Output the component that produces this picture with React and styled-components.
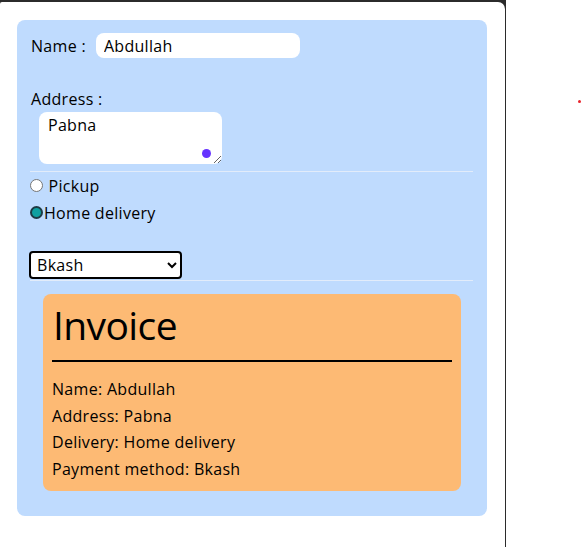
import styled, { createGlobalStyle } from 'styled-components';

const Global = createGlobalStyle`
  html, body {
    margin: 0;
    padding: 0;
    background: #fff;
  }
  body {
    font-family: "Open Sans", "Noto Sans", sans-serif;
    color: #000;
  }
  * { box-sizing: border-box; }
`;

const Frame = styled.div`
  width: 506px;
  height: 547px;
  background: #2b2b2b;
  padding: 2px 1px 0 0;
`;

const Window = styled.div`
  height: 100%;
  background: #fff;
  border-radius: 2px 7px 0 0;
  padding: 18px 0 0 17px;
`;

const Card = styled.form`
  width: 470px;
  background: #bfdbfe;
  border-radius: 8px;
  padding: 13px 14px 25px 13px;
  display: flex;
  flex-direction: column;
  letter-spacing: 0.3px;
`;

const Row = styled.div`
  display: flex;
  align-items: center;
  font-size: 16px;
  line-height: 24px;
`;

const Label = styled.label`
  font-size: 16px;
  line-height: 24px;
  margin-left: 1px;
`;

const TextInput = styled.input`
  width: 204px;
  height: 25px;
  margin-left: 10px;
  border: none;
  border-radius: 8px;
  background: #fff;
  font: inherit;
  font-size: 16px;
  letter-spacing: 0.3px;
  padding: 0 8px;
  outline: none;
`;

const AddressLabel = styled(Label)`
  margin-top: 29px;
`;

const AreaWrap = styled.div`
  position: relative;
  width: 184px;
  height: 53px;
  margin: 1px 0 0 9px;
`;

const TextArea = styled.textarea`
  width: 183px;
  height: 52px;
  border: none;
  border-radius: 8px;
  background: #fff;
  font: inherit;
  font-size: 16px;
  letter-spacing: 0.3px;
  line-height: 22px;
  padding: 2px 9px;
  outline: none;
  display: block;
`;

const Dot = styled.span`
  position: absolute;
  left: 163px;
  top: 37px;
  width: 9px;
  height: 9px;
  border-radius: 50%;
  background: #6633ff;
`;

const Rule = styled.hr`
  border: none;
  border-top: 1px solid ${p => p.$dark ? '#000' : '#e2ecfa'};
  border-top-width: ${p => p.$dark ? '2px' : '1px'};
  margin: ${p => p.$m || '0'};
  width: 100%;
`;

const RadioRow = styled.label`
  display: flex;
  align-items: center;
  height: 27px;
  font-size: 16px;
  white-space: pre;
`;

const Radio = styled.input.attrs({ type: 'radio' })`
  appearance: none;
  width: 13px;
  height: 13px;
  margin: 0 1px 0 0;
  border-radius: 50%;
  border: 1px solid #767676;
  background: #fff;
  &:checked {
    border: 2px solid #1d3b44;
    background: #0fa0a0;
  }
`;

const Select = styled.select`
  width: 153px;
  height: 28px;
  margin: 25px 0 0 -1px;
  border: 2px solid #000;
  border-radius: 4px;
  background: #fff;
  font: inherit;
  font-size: 16px;
  letter-spacing: 0.3px;
  padding: 0 2px;
  color: #000;
`;

const Invoice = styled.div`
  margin: 13px 12px 0 13px;
  background: #fdba74;
  border-radius: 8px;
  padding: 7px 9px 9px 9px;
`;

const Title = styled.h1`
  margin: 0 0 0 1px;
  font-size: 39px;
  font-weight: 400;
  line-height: 48px;
  letter-spacing: -0.6px;
`;

const Line = styled.p`
  margin: 0;
  font-size: 16px;
  line-height: 26.5px;
`;

const Pin = styled.span`
  position: absolute;
  left: 578px;
  top: 100px;
  width: 3px;
  height: 3px;
  border-radius: 50%;
  background: #e8242c;
`;

export default function App() {
  return (
    <>
      <Global />
      <Frame>
        <Window>
          <Card onSubmit={e => e.preventDefault()}>
            <Row>
              <Label>Name :</Label>
              <TextInput defaultValue="Abdullah" />
            </Row>
            <AddressLabel>Address :</AddressLabel>
            <AreaWrap>
              <TextArea defaultValue="Pabna" />
              <Dot />
            </AreaWrap>
            <Rule $m="6px 0 0 0" />
            <RadioRow>
              <Radio name="delivery" />
              {' Pickup'}
            </RadioRow>
            <RadioRow>
              <Radio name="delivery" defaultChecked />
              Home delivery
            </RadioRow>
            <Select defaultValue="Bkash">
              <option>Bkash</option>
              <option>Nagad</option>
              <option>Cash on delivery</option>
            </Select>
            <Rule $m="1px 0 0 0" />
            <Invoice>
              <Title>Invoice</Title>
              <Rule $dark $m="11px 0 14px 0" />
              <Line>Name: Abdullah</Line>
              <Line>Address: Pabna</Line>
              <Line>Delivery: Home delivery</Line>
              <Line>Payment method: Bkash</Line>
            </Invoice>
          </Card>
        </Window>
      </Frame>
      <Pin />
    </>
  );
}
